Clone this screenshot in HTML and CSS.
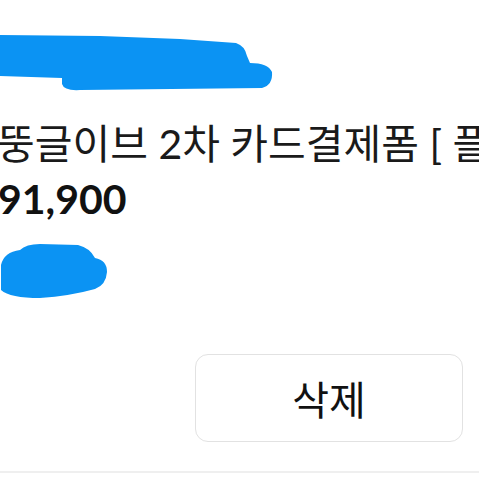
FILE: index.html
```html
<!DOCTYPE html>
<html lang="ko">
<head>
<meta charset="utf-8">
<link rel="stylesheet" href="styles.css">
</head>
<body>
<div class="item">
  <svg class="redact redact-name" width="280" height="100" viewBox="0 0 280 100" aria-hidden="true">
    <path d="M0,35 L100,36 L180,39 L236,43 Q245,46 247,56 L250,63 Q268,63 272,72 Q273,85 262,88 L80,90 Q64,91 62,84 L62,78 L0,76 Z" fill="#0b93f3"/>
  </svg>
  <div class="title">뚱글이브 2차 카드결제폼 [ 플레이브 ]</div>
  <div class="price">91,900</div>
  <svg class="redact redact-meta" width="120" height="80" viewBox="0 0 120 80" aria-hidden="true">
    <path d="M1,41 Q4,28 20,26 Q26,20 40,20 L78,21 Q90,24 95,34 Q107,36 107,48 Q106,61 95,65 Q70,72 40,74 Q10,74 1,66 Z" fill="#0b93f3"/>
  </svg>
  <div class="actions">
    <button class="btn-delete" type="button">삭제</button>
  </div>
  <div class="divider"></div>
</div>
</body>
</html>
```

FILE: styles.css
```css
html, body {
  margin: 0;
  padding: 0;
  background: #ffffff;
}

body {
  width: 479px;
  height: 479px;
  overflow: hidden;
  font-family: Lato, "Noto Sans CJK KR", sans-serif;
  color: #161616;
}

.item {
  display: flex;
  flex-direction: column;
  overflow: hidden;
}

.redact {
  display: block;
}

.title {
  margin-top: 19px;
  margin-left: -3px;
  height: 50px;
  font-size: 41px;
  line-height: 50px;
  white-space: nowrap;
  overflow: hidden;
  color: #1a1a1a;
}

.price {
  margin-top: 5px;
  margin-left: -2px;
  height: 50px;
  font-size: 41px;
  line-height: 50px;
  font-weight: 700;
  color: #111111;
}

.actions {
  margin-top: 50px;
  display: flex;
  justify-content: flex-end;
  padding-right: 16px;
}

.btn-delete {
  width: 268px;
  height: 88px;
  box-sizing: border-box;
  background: #ffffff;
  border: 1.5px solid #e2e2e2;
  border-radius: 13px;
  font-family: "Noto Sans CJK KR", sans-serif;
  font-size: 40px;
  color: #111111;
  padding: 0;
}

.divider {
  margin-top: 29px;
  height: 2px;
  background: #efefef;
}
```
